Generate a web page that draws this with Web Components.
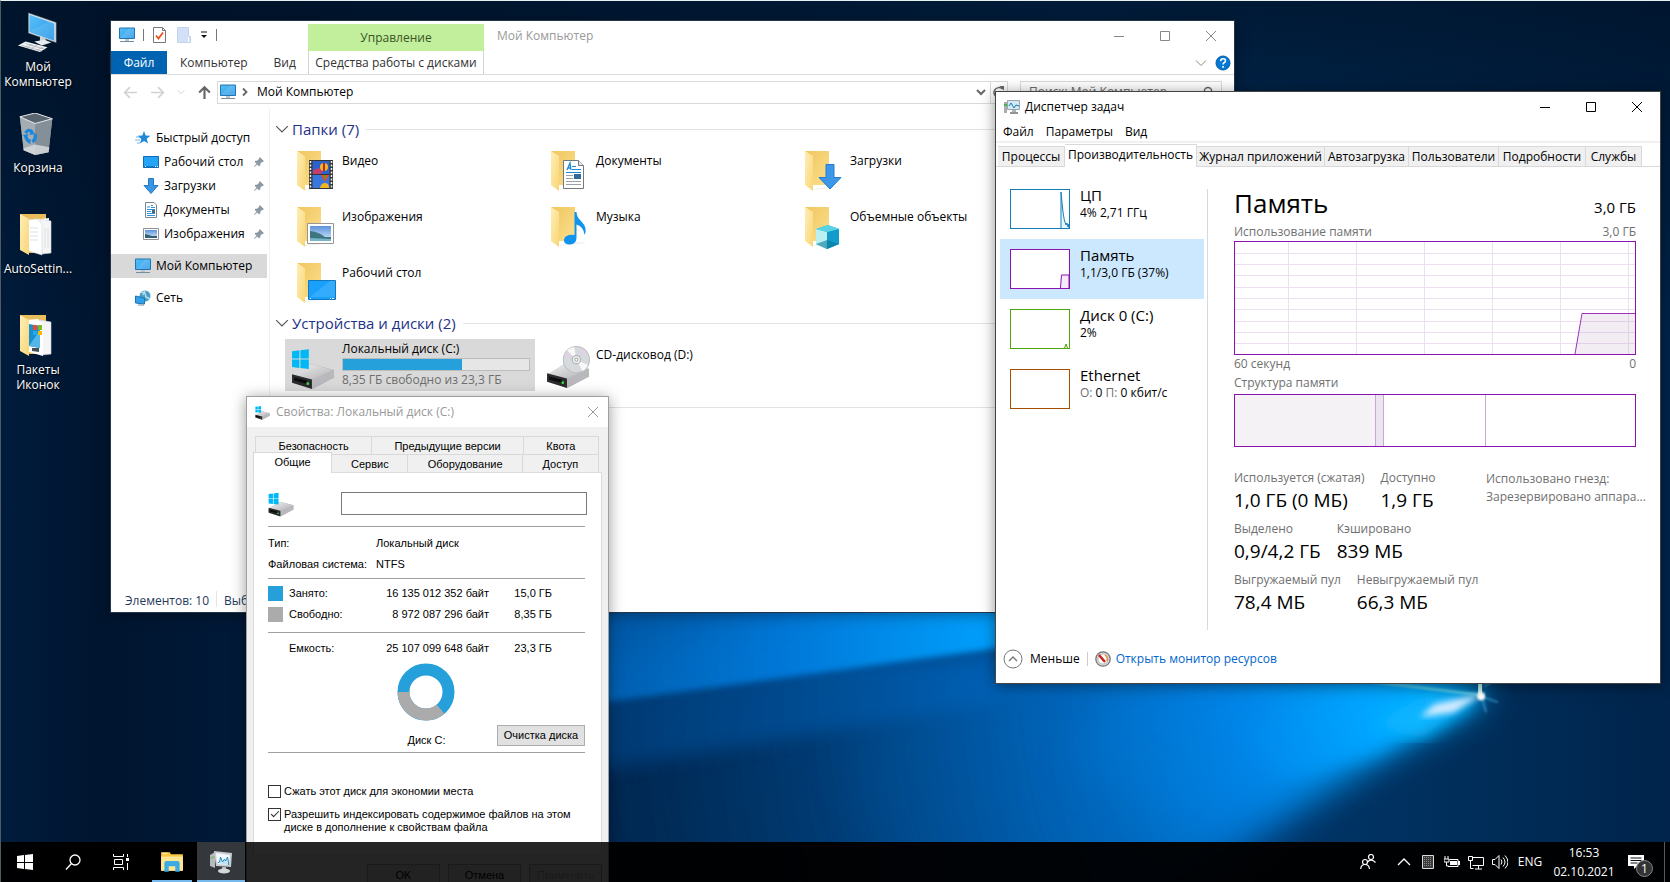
<!DOCTYPE html>
<html lang="ru">
<head>
<meta charset="utf-8">
<title>Рабочий стол</title>
<style>
html, body {
    height: 100%;
}
body {
    margin: 0;
    overflow: hidden;
    background: #00142c;
    font-family: "Open Sans", "Noto Sans", sans-serif;
    font-size: 12px;
    line-height: 16px;
    color: #000;
}
</style>
</head>
<body>
<desk-top>
    <desk-icon slot="icons" icon="pc">Мой Компьютер</desk-icon>
    <desk-icon slot="icons" icon="bin">Корзина</desk-icon>
    <desk-icon slot="icons" icon="docs">AutoSettin...</desk-icon>
    <desk-icon slot="icons" icon="pack">Пакеты Иконок</desk-icon>
    <explorer-window></explorer-window>
    <properties-dialog></properties-dialog>
    <task-manager></task-manager>
    <task-bar slot="bar"></task-bar>
</desk-top>

<script>
// gradients are repeated in every icon because each svg sits in its own shadow root
const defs = `<defs>
<linearGradient id="scr" x1="0" y1="0" x2="1" y2="1"><stop offset="0" stop-color="#57c1f7"/><stop offset="1" stop-color="#2b97e8"/></linearGradient>
<linearGradient id="back" x1="0" y1="0" x2="1" y2="1"><stop offset="0" stop-color="#f0c55e"/><stop offset="1" stop-color="#fbe08e"/></linearGradient>
<linearGradient id="flap" x1="0" y1="0" x2="1" y2="1"><stop offset="0" stop-color="#ffeeb4"/><stop offset="1" stop-color="#f8d678"/></linearGradient>
<linearGradient id="met" x1="0" y1="0" x2="1" y2="1"><stop offset="0" stop-color="#f1f1f1"/><stop offset="1" stop-color="#aeaeb2"/></linearGradient>
<linearGradient id="sky" x1="0" y1="0" x2="0" y2="1"><stop offset="0" stop-color="#5a93dc"/><stop offset="1" stop-color="#dcecfa"/></linearGradient>
</defs>`

const folder = `<path d="M1 0h24v34H8z" fill="url(#back)"/><path d="M1 0l8 5v35l-8-6z" fill="url(#flap)"/><path d="M9 38l22-3 6 1-28 3z" fill="#000" opacity=".06"/>`
const drive = `<path d="M1 29l15-10q3-2 6-1l19 5v7l-19 10q-2 1-4 0L1 34z" fill="#9c9ca0"/>
<path d="M1 28l15-9q3-2 6-1l19 5-21 10z" fill="url(#met)"/>
<path d="M20 32l21-9v7l-21 11z" fill="#b9b9bd"/><path d="M1 27l19 5v9L1 35z" fill="#2a2b2d"/>
<path d="M3 30l12 3v3L3 33z" fill="#0c0c0c"/><circle cx="16" cy="36" r="1.300" fill="#3be03b"/>`
const flag = `<path d="M1 5l7-1v8H1zM9 4l8-1v9H9zM1 13h7v8l-7-1zM9 13h8v9l-8-1z" fill="#00b8f5"/>`

const icons = {
    pc: ['0 0 44 44', `<path d="M12 1l29 10v21L12 22z" fill="#dfe6ea" stroke="#6e7d87" stroke-width=".6"/><path d="M13 3l26 9v18l-26-9z" fill="url(#scr)"/><path d="M13 20L34 10l5 2v18z" fill="#fff" opacity=".1"/>
<path d="M24 25l6 3v4h-6z" fill="#cdd3d6"/><path d="M18 31l11-2 7 3-10 3z" fill="#e6ebee"/><path d="M1 35l8-4 23 6-8 5z" fill="#f0f2f3"/><path d="M5 35l21 6M9 33l20 6M10 37l6-3M15 38l6-3M21 40l6-3" stroke="#a3adb3" stroke-width=".8"/>`],
    bin: ['0 0 44 44', `<path d="M3 4l16-4 18 6-4 35-14 3L7 39z" fill="#8d979e"/><path d="M3 4l16 7v33L7 39z" fill="#a5adb3"/><path d="M37 6l-18 5v33l14-3z" fill="#858f97"/><path d="M3 4l16-4 18 6-18 5z" fill="#596670" stroke="#e9edf0"/>
<path d="M7 37l12-4 15 3-1 5-14 3-12-5z" fill="#d9dcdf" opacity=".8"/><g fill="none" stroke="#1b87dc" stroke-width="3.500"><path d="M9 21q3-5 7-1"/><path d="M9 24q1 5 5 6"/><path d="M19 22q1 6-3 8"/></g><path d="M15 17l4 5-6 1zM6 23l6-1-2 5zM14 27v6l-3-3z" fill="#1b87dc"/>`],
    docs: ['0 0 40 42', `<path d="M2 0h26v39H10z" fill="#e8bd5b"/><path d="M14 6l17-2v33l-8 1z" fill="#fff"/><path d="M22 5l11 2v32l-9 1z" fill="#f5f5f5" stroke="#ccd2d6" stroke-width=".6"/><path d="M8 6l11-1 5 5v31l-13-4z" fill="#fff" stroke="#d5d9db" stroke-width=".6"/><path d="M12 14h8M12 18h8M12 22h8M12 26h8M27 14v20M30 14v20" stroke="#dbe0e3"/><path d="M2 0l9 5v36l-9-5z" fill="url(#flap)"/>`],
    pack: ['0 0 40 42', `<path d="M2 0h26v39H10z" fill="#e8bd5b"/><path d="M22 5l11 2v32l-9 1z" fill="#f5f5f5" stroke="#ccd2d6" stroke-width=".6"/><path d="M8 5l12-1 5 5v32l-14-4z" fill="#fff"/><path d="M11 9l11 2v22l-11-2z" fill="#168fd3"/><path d="M11 31l11-16v18z" fill="#54b6e8"/><path d="M14 33h7v4l-7-1z" fill="#46525b"/><path d="M15 10h4v5h-4z" fill="#ef4a2c"/><path d="M20 10h4v5h-4z" fill="#76bd22"/><path d="M15 16h4v4h-4z" fill="#2ba5ed"/><path d="M20 16h4v4h-4z" fill="#f7b90b"/><path d="M2 0l9 5v36l-9-5z" fill="url(#flap)"/>`],
    monitor: ['0 0 16 16', `<path d="M.5 1h15v10.500H.5z" fill="url(#scr)" stroke="#2376ad"/><path d="M1 11L10 1.500h5V11z" fill="#fff" opacity=".14"/><path d="M6 12h4v2H6z" fill="#b7c6d0"/><path d="M1 14h14v1H1z" fill="#788c9a"/>`],
    check: ['0 0 14 16', `<path d="M.5.5h9l3 3v12H.5z" fill="#fff" stroke="#777"/><path d="M9.500.5v3h3" fill="none" stroke="#777"/><path d="M3 8.500l2.500 3 4.500-6" fill="none" stroke="#e8501e" stroke-width="1.800"/>`],
    blank: ['0 0 14 16', `<path d="M.5.5h11v9h2v6H.5z" fill="#d3e0f5" stroke="#c3d2ec"/><path d="M11.500 10v5" stroke="#fff"/>`],
    drop: ['0 0 8 8', `<path d="M1 1h6" stroke="#111"/><path d="M1 4h6L4 7z" fill="#111"/>`],
    back: ['0 0 14 14', `<path d="M13 7H2M6.500 2L1.500 7l5 5" fill="none" stroke="#d2d2d2" stroke-width="1.500"/>`],
    forward: ['0 0 14 14', `<path d="M1 7h11M7.500 2l5 5-5 5" fill="none" stroke="#d2d2d2" stroke-width="1.500"/>`],
    up: ['0 0 14 14', `<path d="M7 13V2M2 7l5-5 5 5" fill="none" stroke="#666" stroke-width="2"/>`],
    down: ['0 0 12 12', `<path d="M1 3.500l5 5 5-5" fill="none" stroke="currentColor"/>`],
    bold: ['0 0 12 12', `<path d="M2 4l4 4 4-4" fill="none" stroke="currentColor" stroke-width="2"/>`],
    right: ['0 0 12 12', `<path d="M4 2.500L7.500 6 4 9.500" fill="none" stroke="#666" stroke-width="1.800"/>`],
    refresh: ['0 0 12 12', `<path d="M9.500 3A5 5 0 1 0 11 6.500" fill="none" stroke="#666" stroke-width="1.500"/><path d="M6.500 0h4.500v4.500z" fill="#666"/>`],
    find: ['0 0 12 12', `<circle cx="7" cy="5" r="3.600" fill="none" stroke="#666" stroke-width="1.500"/><path d="M4.500 8L1 11.500" stroke="#666" stroke-width="1.800"/>`],
    help: ['0 0 16 16', `<circle cx="8" cy="8" r="7" fill="#0078d7" stroke="#0a5ba0"/><path d="M5.700 6.200q0-2.500 2.400-2.500t2.300 2q0 1.200-1.300 2-1 .7-1 1.800" fill="none" stroke="#fff" stroke-width="1.600"/><path d="M7.200 11h1.700v1.700H7.200z" fill="#fff"/>`],
    star: ['0 0 16 16', `<path d="M9 1l1.700 4.500 4.800.2-3.800 3 1.300 4.800L9 11l-4 2.500L6.300 9l-3.800-3.300 4.800-.2z" fill="#1e88d6"/><path d="M1 7h4M0 10h5M2 13h3" stroke="#6cb5ea"/>`],
    desk: ['0 0 16 16', `<path d="M.5 2.500h15v11H.5z" fill="#25a3f7" stroke="#0c6cb4"/><path d="M1 12.500h14" stroke="#0b7ed0"/><path d="M2 12.500h1M12 12.500h1M14 12.500h1" stroke="#fff"/>`],
    load: ['0 0 16 16', `<path d="M5.500.5h5v7h4.500L8 15.500 1 7.500h4.500z" fill="#3a96e4" stroke="#2478c4"/>`],
    doc: ['0 0 16 16', `<path d="M2.500.5h8.500l2.500 2.500v12.500h-11z" fill="#fff" stroke="#7b858c"/><path d="M4 5h3M4 7.500h8M4 9.500h4M4 11.500h8M4 13.500h8M8 3.500h2M8 5.500h4" stroke="#2f94d5"/><path d="M9 8h3v3H9z" fill="#49657b"/>`],
    pic: ['0 0 16 16', `<path d="M.5 2.500h15v11H.5z" fill="#fff" stroke="#8c9298"/><path d="M2 4h12v8H2z" fill="url(#sky)"/><path d="M2 8l4 1 3 1h5v2H2z" fill="#355f75"/>`],
    net: ['0 0 16 16', `<circle cx="10" cy="6" r="5.500" fill="#4a9fc4"/><path d="M6 2l4 1 1 4 4 2M10 .5L8 5" stroke="#b9dcec" stroke-width="1.500" fill="none"/><path d="M.5 6l9 2v6l-9-1z" fill="#2fa1ea" stroke="#1c74b4"/><path d="M3 15h6" stroke="#7d8c98"/>`],
    pin: ['0 0 12 12', `<path d="M7 0l5 5-1.500 1-1 0-2 2.500 0 2L6 11 4 9 .5 12 0 11.500 3 8 1 6l.5-1.500h2L6 2.500 6 1.500z" fill="#8c99a3"/>`],
    video: ['0 0 40 42', folder + `<path d="M13 9h24v29H13z" fill="#343434"/><path d="M16.500 10h17v13h-17z" fill="#2d62cc"/><path d="M16.500 24h17v13h-17z" fill="#3977dd"/><path d="M14.500 10v28M35.500 10v28" stroke="#f1f1f1" stroke-width="1.500" stroke-dasharray="2 1.500"/><path d="M17 19l6-2 4 3-2 3h-8z" fill="#c23e6e"/><circle cx="28" cy="16" r="4" fill="#f1b722"/><path d="M28 12v8" stroke="#bd271d" stroke-width="2"/><path d="M25 24h8l-4 7z" fill="#ec4a22"/><path d="M28 24h2v6z" fill="#35ae32"/><path d="M24 37q1-5 5-5t4 5z" fill="#f1b722"/>`],
    documents: ['0 0 40 42', folder + `<path d="M13.500 9.500h15l5 5v23h-20z" fill="#fff" stroke="#74797d"/><path d="M28.500 9.500v5h5" fill="#e4e8ea" stroke="#74797d"/><path d="M17 19l3-7 1 7M17.500 17h3.500" stroke="#1e88d6" fill="none" stroke-width="1.300"/><path d="M22 15.500h4M22 18.500h9M16 21.500h15" stroke="#1e88d6"/><path d="M16 24.500h7M16 27.500h7M16 30.500h15M16 33.500h15" stroke="#9aa0a4"/><path d="M24 23h7v5h-7z" fill="#31699a"/>`],
    downloads: ['0 0 40 42', folder + `<path d="M22 13.500h8v13h7L26 38 15 26.500h7z" fill="#3d97e8" stroke="#257cce"/>`],
    images: ['0 0 40 42', folder + `<path d="M11.500 16.500h26v20h-26z" fill="#fff" stroke="#979797"/><path d="M14 19h21v15H14z" fill="url(#sky)"/><path d="M14 24q9 1 15 6h6v4H14z" fill="#3f7580"/><path d="M14 31l21 1v2H14z" fill="#77b5c7"/>`],
    music: ['0 0 40 42', folder + `<path d="M24.500 5h2q0 5 4.500 9 7 7 3.500 14-.5-8-8-10.500V31q-.5 6-6.500 6.500-6.500 0-6-5Q15.500 27 24.500 28z" fill="#0e93ee"/>`],
    objects: ['0 0 40 42', folder + `<path d="M12 22l12-4 11 4v15l-12 5-11-5z" fill="#19b9d8"/><path d="M12 22l11 3v17l-11-5z" fill="#baf0f2"/><path d="M23 25l12-3v15l-12 5z" fill="#119ccb"/><path d="M12 22l12-4 11 4-12 3z" fill="#5bd2e3"/><path d="M12 37l11-4 12 4-12 5z" fill="#087a9b" opacity=".6"/>`],
    desktop: ['0 0 40 42', folder + `<path d="M12.500 17.500h27v19h-27z" fill="#18a0fb" stroke="#1078be"/><path d="M14 34L34 18h5v16z" fill="#fff" opacity=".12"/><path d="M14 35.500h1M34 35.500h1M36 35.500h2" stroke="#fff"/>`],
    drive: ['0 0 42 42', drive + flag],
    cd: ['0 0 42 42', drive + `<circle cx="29" cy="14" r="12.500" fill="#d6dadd" stroke="#bcc0c3"/><path d="M29 14L20 5a12 12 0 0 1 7-3zM29 14l11 5a12 12 0 0 1-5 6z" fill="#fff" opacity=".8"/><path d="M29 14l-12-4 1-3zM29 14l6-11 3 3z" fill="#ebc8ec" opacity=".6"/><circle cx="29" cy="14" r="4" fill="#eceeef" stroke="#aab0b4"/><circle cx="29" cy="14" r="1.500" fill="#fff" stroke="#aaa"/>`],
    tm: ['0 0 16 16', `<path d="M0 3h3v11H0z" fill="#a8adb0"/><path d="M0 5h3v2H0z" fill="#41b946"/><path d="M3.500 1.500h12v9h-12z" fill="#d3e9f5" stroke="#9aa5ac"/><path d="M5 7l2-3 3 5 2-3 3 1" stroke="#1779b5" fill="none"/><path d="M8 11h4v2H8z" fill="#aeb4b8"/><path d="M6 14h8" stroke="#8f9599" stroke-width="2"/>`],
    gauge: ['0 0 16 16', `<circle cx="8" cy="8" r="7.200" fill="#d8d8d8" stroke="#777" stroke-width="1.300"/><circle cx="8" cy="8" r="5" fill="#fff" stroke="#aaa" stroke-width=".7"/><path d="M10 4q3 2 2 6" stroke="#e78d49" fill="none" stroke-width="1.500"/><path d="M4 4l6 7" stroke="#cb1f1c" stroke-width="2.500"/>`],
    less: ['0 0 20 20', `<circle cx="10" cy="10" r="9" fill="none" stroke="#777"/><path d="M6 12l4-4 4 4" fill="none" stroke="#777" stroke-width="1.300"/>`],
    min: ['0 0 12 12', `<path d="M1 6.500h10" stroke="currentColor"/>`],
    max: ['0 0 12 12', `<path d="M1.500 1.500h9v9h-9z" fill="none" stroke="currentColor"/>`],
    close: ['0 0 12 12', `<path d="M1 1l10 10M11 1L1 11" stroke="currentColor"/>`],
    start: ['0 0 16 16', `<path d="M0 2l7-1v7H0zM8 1l8-1v8H8zM0 9h7v6l-7-1zM8 9h8v7l-8-1z" fill="#fff"/>`],
    search: ['0 0 16 16', `<circle cx="10" cy="6" r="5" fill="none" stroke="#fff" stroke-width="1.300"/><path d="M6.500 9.500L1 15.500" stroke="#fff" stroke-width="1.300"/>`],
    view: ['0 0 16 16', `<path d="M.5 0v2.500h10V0M1.500 5.500h8v5h-8zM.5 16v-2.500h10V16M14.500 0v3M14.500 9v7" fill="none" stroke="#fff"/><path d="M13 4h3v3h-3z" fill="#fff"/>`],
    files: ['0 0 22 20', `<path d="M1 1h8l1 2h11v15H1z" fill="#fbc842"/><path d="M1 5h20v13H1z" fill="#ffe694"/><path d="M4 19v-8q0-2 2-2h10q2 0 2 2v8h-4v-5H8v5z" fill="#3cabe2"/><path d="M2 2h5" stroke="#fff3c6"/>`],
    taskmgr: ['0 0 24 24', `<path d="M1 5l5-3v16l-5-2z" fill="#b6babc"/><path d="M1 7l5-1v2l-5 1z" fill="#8fb58c"/><path d="M5 1l18 2-1 14-15-1z" fill="#c9cdcf"/><path d="M7 3l14 2-1 10-12-1z" fill="#f2fafd"/><path d="M8.500 13l2-1 1-5 2 5 2-3 1 2 2-4 1 5v3" fill="#bfe3f5" stroke="#1e82bb" stroke-width=".9"/><path d="M13 17h4v3h-4z" fill="#b7bbbe"/><ellipse cx="15" cy="21" rx="6" ry="2.500" fill="#d5d8da"/>`],
    people: ['0 0 16 16', `<g fill="none" stroke="#fff" stroke-width="1.200"><circle cx="11" cy="3" r="2.500"/><path d="M7.500 8q3.500-4 8 .5"/><circle cx="5" cy="8" r="2.500"/><path d="M.7 15Q1 10.500 5 10.500T9.500 15"/></g>`],
    tray: ['0 0 16 16', `<path d="M2 11l6-6 6 6" fill="none" stroke="#fff" stroke-width="1.300"/>`],
    dots: ['0 0 16 16', `<path d="M2.500 1.500h11v13h-11z" fill="#3b3b3b" stroke="#ddd"/><path d="M4 3.500h8M4 5.500h8M4 7.500h8M4 9.500h8M4 11.500h8" stroke="#8c8c8c" stroke-dasharray="1 1"/>`],
    battery: ['0 0 16 16', `<path d="M5.500 5.500h8.500v7H4" fill="none" stroke="#fff"/><path d="M6 7h7v4H6z" fill="#fff"/><path d="M14 7h2v4h-2z" fill="#fff"/><path d="M1 2v3M4 2v3M0 5h5v3H0zM2.500 8v4h2" stroke="#fff" fill="none"/>`],
    lan: ['0 0 16 16', `<path d="M5 3.500h10.500v8H4.500M7 15h7M10.500 11.500V15M.5 2.500h4v4h-4zM2.500 6v8.500h3" fill="none" stroke="#fff"/>`],
    sound: ['0 0 16 16', `<path d="M.5 5.500H3l4-4v13l-4-4H.5z" fill="none" stroke="#fff"/><path d="M9 5.500q2 2.500 0 5M11 3.500q4 4.500 0 9M13 1.500q6 6.500 0 13" fill="none" stroke="#fff"/>`],
    note: ['0 0 16 16', `<path d="M0 1h16v11H9l-3 3v-3H0z" fill="#fff"/><path d="M2.500 4h11M2.500 6.500h11M2.500 9h7" stroke="#0b0e12" stroke-width="1.200"/>`]
}

class WinIcon extends HTMLElement
{
    constructor()
    {
        super()
        this.attachShadow({ mode: 'open' })
    }
    connectedCallback() {
        const [box, body] = icons[this.getAttribute('name')]
        const extra = body.includes('url(#') ? defs : ''
        this.shadowRoot.innerHTML = `
        <style>
        :host {
            display: block;
            flex: none;
            width: var(--w, 16px);
            height: var(--h, var(--w, 16px));
        }
        svg {
            display: block;
            width: 100%;
            height: 100%;
        }
        </style>
        <svg viewBox="${box}" fill="none" aria-hidden="true">${extra}${body}</svg>`
    }
}
window.customElements.define('win-icon', WinIcon)

class DeskTop extends HTMLElement
{
    constructor()
    {
        super()
        this.attachShadow({ mode: 'open' }).innerHTML = `
        <style>
        :host {
            display: flex;
            flex-direction: column;
            position: relative;
            height: 100vh;
            overflow: hidden;
            box-sizing: border-box;
            border-top: 1px solid #e8f1f1;
            border-left: 1px solid #4f5a61;
        }
        .wall {
            position: absolute;
            inset: 0;
            width: 100%;
            height: 100%;
        }
        .shade {
            position: absolute;
            inset: auto 0 0 0;
            height: 40px;
            background: rgba(0,0,0,.75);
        }
        .icons {
            position: relative;
            display: grid;
            grid-auto-rows: 101px;
            width: 74px;
            flex: 1;
            padding-top: 11px;
        }
        slot[name=bar] {
            display: block;
            position: relative;
            z-index: 5;
        }
        </style>
        <svg class="wall" viewBox="0 0 1670 882" preserveAspectRatio="xMidYMid slice" aria-hidden="true">
            <defs>
                <linearGradient id="base" x1="0" y1="0" x2="1" y2="0">
                    <stop offset="0" stop-color="#001c3c"/><stop offset=".06" stop-color="#00152f"/><stop offset=".36" stop-color="#00264f"/>
                    <stop offset=".65" stop-color="#003c74"/><stop offset=".85" stop-color="#00305e"/><stop offset="1" stop-color="#00244b"/>
                </linearGradient>
                <linearGradient id="top" x1="0" y1="0" x2="0" y2="1">
                    <stop offset="0" stop-color="#001228" stop-opacity=".8"/><stop offset="1" stop-color="#001228" stop-opacity="0"/>
                </linearGradient>
                <radialGradient id="glow" gradientUnits="userSpaceOnUse" cx="1480" cy="695" r="940">
                    <stop offset="0" stop-color="#0cb2ff"/><stop offset=".13" stop-color="#00a4ff"/><stop offset=".26" stop-color="#0086ea"/>
                    <stop offset=".48" stop-color="#0064b8"/><stop offset=".7" stop-color="#004584" stop-opacity=".8"/><stop offset="1" stop-color="#002850" stop-opacity="0"/>
                </radialGradient>
                <linearGradient id="left" gradientUnits="userSpaceOnUse" x1="560" y1="0" x2="1010" y2="0">
                    <stop offset="0" stop-color="#0058a4"/><stop offset=".5" stop-color="#0078d8"/><stop offset="1" stop-color="#00a2ff"/>
                </linearGradient>
                <linearGradient id="band" gradientUnits="userSpaceOnUse" x1="560" y1="0" x2="1250" y2="0">
                    <stop offset="0" stop-color="#003a74"/><stop offset=".6" stop-color="#0060b4"/><stop offset="1" stop-color="#0078d8" stop-opacity="0"/>
                </linearGradient>
                <filter id="b1"><feGaussianBlur stdDeviation="1"/></filter>
                <filter id="b3"><feGaussianBlur stdDeviation="3"/></filter>
                <filter id="b9"><feGaussianBlur stdDeviation="9"/></filter>
                <filter id="b20" x="-20%" y="-30%" width="140%" height="160%"><feGaussianBlur stdDeviation="20"/></filter>
            </defs>
            <path d="M0 0h1670v882H0z" fill="url(#base)"/>
            <path d="M0 0h1670v340H0z" fill="url(#top)"/>
            <path d="M1500 640H900L560 740v60l140 120h440z" fill="url(#glow)" opacity=".75" filter="url(#b20)"/>
            <path d="M1496 680l-496-40-160 100 80 240 210-60z" fill="url(#glow)" opacity=".6" filter="url(#b20)"/>
            <path d="M560 660h560l130 20-240 20L560 776z" fill="url(#band)" opacity=".8" filter="url(#b9)"/>
            <path d="M560 560h560v71L560 708z" fill="url(#left)" filter="url(#b3)"/>
            <path d="M560 580h300L560 664z" fill="#00488f" opacity=".4" filter="url(#b20)"/>
            <path d="M1484 698l-90-34-280 20-40 80 120 60z" fill="url(#glow)" opacity=".8" filter="url(#b20)"/>
            <path d="M1484 697l-110-10-130 40 40 50 90-24z" fill="url(#glow)" filter="url(#b9)"/>
            <path d="M1480 696l-60 2-50 26 50 14z" fill="#0cb6ff" filter="url(#b9)"/>
            <path d="M1484 693l-50 11-14 13 34-5z" fill="#d4ecff" filter="url(#b3)"/>
            <path d="M1370 681l112 14" stroke="#6fd8e8" stroke-width="3" opacity=".7" filter="url(#b1)"/>
            <path d="M1478 670h4v24h-4z" fill="#c6f3ef"/>
            <path d="M1484 686l10-6M1482 698l4 14M1484 697l14 5" stroke="#5cc0f5" stroke-width="2" opacity=".5" filter="url(#b1)"/>
            <circle cx="1481" cy="696" r="4" fill="#fff" filter="url(#b1)"/>
        </svg>
        <div class="shade"></div>
        <div class="icons"><slot name="icons"></slot></div>
        <slot></slot>
        <slot name="bar"></slot>`
    }
}
window.customElements.define('desk-top', DeskTop)

class DeskIcon extends HTMLElement
{
    constructor()
    {
        super()
        this.attachShadow({ mode: 'open' })
    }
    connectedCallback() {
        this.shadowRoot.innerHTML = `
        <style>
        :host {
            display: flex;
            flex-direction: column;
            align-items: center;
            gap: 5px;
            text-align: center;
            line-height: 15px;
            color: #fff;
            text-shadow: 1px 1px 2px #000;
        }
        win-icon { --w: 42px; }
        </style>
        <win-icon name="${this.getAttribute('icon')}"></win-icon>
        <span><slot></slot></span>`
    }
}
window.customElements.define('desk-icon', DeskIcon)

// minimize / maximize / close, used in the window titles
class WinControls extends HTMLElement
{
    constructor()
    {
        super()
        this.attachShadow({ mode: 'open' }).innerHTML = `
        <style>
        :host { display: flex; flex: none; }
        button {
            display: grid;
            place-items: center;
            width: 46px;
            height: 30px;
            padding: 0;
            border: 0;
            background: none;
            color: inherit;
        }
        win-icon { --w: 12px; }
        :host([only-close]) .more { display: none; }
        :host([only-close]) button { width: 30px; }
        </style>
        <button class="more" aria-label="Свернуть"><win-icon name="min"></win-icon></button>
        <button class="more" aria-label="Развернуть"><win-icon name="max"></win-icon></button>
        <button aria-label="Закрыть"><win-icon name="close"></win-icon></button>`
    }
}
window.customElements.define('win-controls', WinControls)

class SideItem extends HTMLElement
{
    constructor()
    {
        super()
        this.attachShadow({ mode: 'open' })
    }
    connectedCallback() {
        const pin = this.hasAttribute('pinned') ? '<win-icon class="pin" name="pin"></win-icon>' : ''
        this.shadowRoot.innerHTML = `
        <style>
        :host { display: block; }
        a {
            display: flex;
            align-items: center;
            gap: 5px;
            height: 24px;
            padding: 0 3px 0 24px;
            color: inherit;
            text-decoration: none;
            white-space: nowrap;
        }
        :host([pinned]) a { padding-left: 32px; }
        :host([current]) { margin: 8px 0; }
        :host([current]) a { background: #d9d9d9; }
        span { flex: 1; }
        .pin { --w: 10px; }
        </style>
        <a href="#"><win-icon name="${this.getAttribute('icon')}"></win-icon><span><slot></slot></span>${pin}</a>`
    }
}
window.customElements.define('side-item', SideItem)

class TileGroup extends HTMLElement
{
    constructor()
    {
        super()
        this.attachShadow({ mode: 'open' }).innerHTML = `
        <style>
        :host { display: block; }
        h2 {
            display: flex;
            align-items: center;
            gap: 3px;
            margin: 0;
            height: 26px;
            font-size: 15px;
            font-weight: 400;
            color: #1e3287;
        }
        h2 win-icon { --w: 14px; color: #555; }
        h2::after {
            content: "";
            flex: 1;
            height: 1px;
            margin-left: 4px;
            background: #e2e2e2;
        }
        .tiles {
            display: grid;
            grid-template-columns: repeat(auto-fill, 254px);
            padding-left: 10px;
        }
        </style>
        <h2><win-icon name="down"></win-icon><slot name="title"></slot></h2>
        <div class="tiles"><slot></slot></div>`
    }
}
window.customElements.define('tile-group', TileGroup)

class FolderTile extends HTMLElement
{
    constructor()
    {
        super()
        this.attachShadow({ mode: 'open' })
    }
    connectedCallback() {
        this.shadowRoot.innerHTML = `
        <style>
        :host {
            display: flex;
            gap: 6px;
            height: 47px;
            padding: 9px 0 0 11px;
        }
        win-icon { --w: 40px; --h: 42px; }
        span { padding-top: 2px; }
        :host([disc]) { padding-left: 7px; height: 43px; }
        :host([disc]) win-icon { --w: 44px; --h: 44px; }
        </style>
        <win-icon name="${this.getAttribute('icon')}"></win-icon><span><slot></slot></span>`
    }
}
window.customElements.define('folder-tile', FolderTile)

class DriveTile extends HTMLElement
{
    constructor()
    {
        super()
        this.attachShadow({ mode: 'open' }).innerHTML = `
        <style>
        :host {
            display: flex;
            gap: 7px;
            height: 52px;
            margin: 3px 4px 0 0;
            padding: 0 5px 0 6px;
            background: #d9d9d9;
            box-sizing: border-box;
        }
        win-icon { --w: 44px; padding-top: 7px; }
        .info { flex: 1; }
        .bar {
            height: 11px;
            margin: 1px 0;
            border: 1px solid #bcbcbc;
            background: #e6e6e6;
        }
        .bar i {
            display: block;
            width: 64%;
            height: 100%;
            background: #26a0da;
        }
        .name { padding-top: 2px; }
        .free { color: #6d6d6d; }
        </style>
        <win-icon name="drive"></win-icon>
        <div class="info">
            <div class="name"><slot></slot></div>
            <div class="bar"><i></i></div>
            <div class="free"><slot name="free"></slot></div>
        </div>`
    }
}
window.customElements.define('drive-tile', DriveTile)

class ExplorerWindow extends HTMLElement
{
    constructor()
    {
        super()
        this.attachShadow({ mode: 'open' }).innerHTML = `
        <style>
        :host {
            position: absolute;
            left: 110px;
            right: 436px;
            top: 20px;
            min-height: 591px;
            display: flex;
            flex-direction: column;
            background: #fff;
            box-shadow: 0 0 0 1px #23364c, 0 2px 14px rgba(0,0,0,.4);
        }
        button {
            border: 0;
            padding: 0;
            background: none;
            font: inherit;
            color: inherit;
        }
        .head {
            display: grid;
            grid-template-columns: 197px 176px 1fr auto;
            grid-template-rows: 30px 23px;
            border-bottom: 1px solid #dadbdc;
            color: #333;
        }
        .quick {
            display: flex;
            align-items: center;
            gap: 8px;
            padding: 0 0 2px 8px;
        }
        .quick i {
            width: 1px;
            height: 12px;
            background: #777;
        }
        .quick .drop { --w: 8px; }
        .tool {
            display: grid;
            place-items: center;
            margin-top: 3px;
            background: #c2ef9b;
            color: #3a5225;
        }
        .title {
            padding: 7px 13px;
            color: #999;
        }
        win-controls { color: #888; }
        .tabs {
            display: flex;
        }
        .tabs button { padding: 0 13px; }
        .tabs .file {
            flex: none;
            width: 56px;
            padding: 0;
            background: #0063b1;
            color: #fff;
        }
        .disk {
            border: solid #d5d5d5;
            border-width: 0 1px;
            white-space: nowrap;
        }
        .help {
            grid-column: 4;
            display: flex;
            align-items: center;
            justify-content: flex-end;
            gap: 8px;
            padding-right: 3px;
            color: #888;
        }
        .nav {
            display: flex;
            align-items: center;
            height: 34px;
            padding: 0 12px;
            color: #666;
        }
        .nav button { display: grid; place-items: center; }
        .arrows {
            display: flex;
            align-items: center;
            gap: 12px;
            width: 94px;
        }
        .arrows win-icon { --w: 15px; }
        .arrows .small { --w: 8px; color: #bbb; }
        .address {
            flex: 1;
            display: flex;
            align-items: center;
            gap: 3px;
            height: 21px;
            padding-left: 2px;
            border: 1px solid #d9d9d9;
            color: #000;
        }
        .address span { flex: 1; padding-left: 3px; }
        .address win-icon.small, .address button win-icon { --w: 12px; color: #666; }
        .refresh {
            width: 17px;
            height: 21px;
            border-left: 1px solid #d9d9d9;
        }
        .search {
            display: flex;
            align-items: center;
            width: 200px;
            height: 21px;
            margin-left: 12px;
            border: 1px solid #d9d9d9;
        }
        .search input {
            flex: 1;
            min-width: 0;
            border: 0;
            padding: 0 8px;
            font: inherit;
        }
        .search input::placeholder { color: #6d6d6d; }
        .search win-icon { --w: 12px; margin-right: 8px; }
        .body {
            flex: 1;
            display: flex;
        }
        aside {
            width: 156px;
            padding: 17px 2px 0 0;
            border-right: 1px solid #f0f0f0;
        }
        .main {
            flex: 1;
            padding: 7px 0 0 5px;
        }
        .more {
            height: 16px;
            border-bottom: 1px solid #e2e2e2;
        }
        footer {
            display: flex;
            height: 21px;
            padding: 0 14px;
            color: #1e395b;
        }
        footer span + span {
            margin-left: 7px;
            padding-left: 7px;
            height: 16px;
            border-left: 1px solid #e5e5e5;
        }
        footer span { line-height: 20px; }
        </style>
        <div class="head">
            <div class="quick">
                <win-icon name="monitor"></win-icon><i></i>
                <win-icon name="check"></win-icon><win-icon name="blank"></win-icon>
                <win-icon class="drop" name="drop"></win-icon><i></i>
            </div>
            <div class="tool">Управление</div>
            <div class="title">Мой Компьютер</div>
            <win-controls></win-controls>
            <div class="tabs"><button class="file">Файл</button><button>Компьютер</button><button>Вид</button></div>
            <button class="disk">Средства работы с дисками</button>
            <div class="help"><win-icon name="down" style="--w:12px"></win-icon><win-icon name="help"></win-icon></div>
        </div>
        <div class="nav">
            <div class="arrows">
                <button aria-label="Назад"><win-icon name="back"></win-icon></button>
                <button aria-label="Вперед"><win-icon name="forward"></win-icon></button>
                <win-icon class="small" name="down"></win-icon>
                <button aria-label="Вверх"><win-icon name="up"></win-icon></button>
            </div>
            <div class="address">
                <win-icon name="monitor"></win-icon><win-icon class="small" name="right"></win-icon>
                <span>Мой Компьютер</span>
                <button aria-label="История"><win-icon name="bold"></win-icon></button>
                <button class="refresh" aria-label="Обновить"><win-icon name="refresh"></win-icon></button>
            </div>
            <div class="search">
                <input type="search" aria-label="Поиск" placeholder="Поиск: Мой Компьютер">
                <win-icon name="find"></win-icon>
            </div>
        </div>
        <div class="body">
            <aside>
                <side-item icon="star">Быстрый доступ</side-item>
                <side-item icon="desk" pinned>Рабочий стол</side-item>
                <side-item icon="load" pinned>Загрузки</side-item>
                <side-item icon="doc" pinned>Документы</side-item>
                <side-item icon="pic" pinned>Изображения</side-item>
                <side-item icon="monitor" current>Мой Компьютер</side-item>
                <side-item icon="net">Сеть</side-item>
            </aside>
            <div class="main">
                <tile-group>
                    <span slot="title">Папки (7)</span>
                    <folder-tile icon="video">Видео</folder-tile>
                    <folder-tile icon="documents">Документы</folder-tile>
                    <folder-tile icon="downloads">Загрузки</folder-tile>
                    <folder-tile icon="images">Изображения</folder-tile>
                    <folder-tile icon="music">Музыка</folder-tile>
                    <folder-tile icon="objects">Объемные объекты</folder-tile>
                    <folder-tile icon="desktop">Рабочий стол</folder-tile>
                </tile-group>
                <tile-group>
                    <span slot="title">Устройства и диски (2)</span>
                    <drive-tile>Локальный диск (C:)<span slot="free">8,35 ГБ свободно из 23,3 ГБ</span></drive-tile>
                    <folder-tile icon="cd" disc>CD-дисковод (D:)</folder-tile>
                </tile-group>
                <div class="more"></div>
            </div>
        </div>
        <footer><span>Элементов: 10</span><span>Выб</span></footer>`
    }
}
window.customElements.define('explorer-window', ExplorerWindow)

class PropertiesDialog extends HTMLElement
{
    constructor()
    {
        super()
        this.attachShadow({ mode: 'open' }).innerHTML = `
        <style>
        :host {
            position: absolute;
            left: 245px;
            top: 395px;
            width: 361px;
            background: #f0f0f0;
            border: 1px solid #a0a0a0;
            box-shadow: 0 2px 14px rgba(0,0,0,.4);
            font: 11px/13px "Liberation Sans", sans-serif;
        }
        header {
            display: flex;
            align-items: center;
            gap: 6px;
            height: 30px;
            padding-left: 8px;
            background: #fff;
            font: 12px/16px "Open Sans", sans-serif;
            color: #999;
        }
        header span { flex: 1; }
        header win-icon { --w: 15px; }
        .box { padding: 9px 6px 0; }
        .row {
            display: grid;
            padding: 0 3px 0 2px;
        }
        .row.one { grid-template-columns: 117fr 151fr 75fr; }
        .row.two { grid-template-columns: 77fr 76fr 114fr 76fr; }
        .row button {
            height: 18px;
            padding: 1px 0 0;
            border: solid #d9d9d9;
            border-width: 1px 1px 0 0;
            background: #f0f0f0;
            font: inherit;
        }
        .row button:first-child { border-left-width: 1px; }
        .row button.on {
            height: 21px;
            margin: -2px 0 -1px -2px;
            padding-bottom: 3px;
            background: #fff;
            z-index: 1;
        }
        .page {
            height: 383px;
            padding: 0 16px 0 14px;
            border: 1px solid #dcdcdc;
            background: #fff;
            box-sizing: border-box;
        }
        .name {
            display: flex;
            align-items: end;
            justify-content: space-between;
            height: 53px;
            border-bottom: 1px solid #a0a0a0;
        }
        .name win-icon { --w: 26px; padding-bottom: 9px; }
        .name input {
            width: 246px;
            height: 23px;
            margin: 0 -2px 11px 0;
            padding: 1px 4px;
            border: 1px solid #7a7a7a;
            box-sizing: border-box;
            font: inherit;
        }
        dl {
            display: grid;
            grid-template-columns: 108px 1fr;
            row-gap: 8px;
            margin: 0;
            padding: 10px 0 7px;
            border-bottom: 1px solid #a0a0a0;
        }
        dd { margin: 0; }
        table {
            width: 100%;
            border-collapse: collapse;
        }
        th, td {
            height: 21px;
            padding: 0;
            text-align: right;
            font-weight: 400;
        }
        th {
            width: 100px;
            text-align: left;
        }
        td:last-child {
            width: 63px;
            padding-right: 33px;
        }
        .sum th, .sum td {
            height: 30px;
            border-top: 1px solid #a0a0a0;
        }
        .sum span { padding-left: 21px; }
        .gap td { height: 7px; }
        .gap.small td { height: 4px; }
        th span { vertical-align: middle; }
        th i {
            display: inline-block;
            width: 15px;
            height: 15px;
            margin-right: 6px;
            vertical-align: middle;
            background: #26a0da;
        }
        th i.free { background: #ababab; }
        .chart {
            display: grid;
            grid-template-columns: 1fr 1fr 1fr;
            align-items: end;
            padding-bottom: 5px;
            border-bottom: 1px solid #a0a0a0;
        }
        figure {
            grid-column: 2;
            margin: 0;
            text-align: center;
        }
        figure svg {
            display: block;
            width: 58px;
            height: 58px;
            margin: 0 auto 13px;
        }
        .clean {
            justify-self: end;
            width: 88px;
            height: 21px;
            margin-bottom: 1px;
            padding: 0;
            border: 1px solid #adadad;
            background: #e1e1e1;
            font: inherit;
            white-space: nowrap;
        }
        label {
            display: flex;
            gap: 3px;
            align-items: flex-start;
        }
        .checks {
            display: grid;
            gap: 10px;
            padding-top: 32px;
            margin-right: -8px;
        }
        input[type=checkbox] {
            appearance: none;
            flex: none;
            width: 13px;
            height: 13px;
            margin: 0;
            border: 1px solid #333;
            background: #fff;
        }
        input:checked::before {
            content: "";
            display: block;
            width: 3px;
            height: 7px;
            margin: 0 0 0 4px;
            border: solid #222;
            border-width: 0 1px 1px 0;
            transform: rotate(45deg);
        }
        .buttons {
            display: flex;
            justify-content: flex-end;
            gap: 8px;
            padding: 9px 0 10px;
        }
        .buttons button {
            width: 73px;
            height: 23px;
            padding: 0;
            border: 1px solid #adadad;
            background: #e1e1e1;
            font: inherit;
        }
        </style>
        <header><win-icon name="drive"></win-icon><span>Свойства: Локальный диск (C:)</span><win-controls only-close></win-controls></header>
        <div class="box">
            <div class="row one"><button>Безопасность</button><button>Предыдущие версии</button><button>Квота</button></div>
            <div class="row two"><button class="on">Общие</button><button>Сервис</button><button>Оборудование</button><button>Доступ</button></div>
            <div class="page">
                <div class="name"><win-icon name="drive"></win-icon><input type="text" aria-label="Метка тома"></div>
                <dl><dt>Тип:</dt><dd>Локальный диск</dd><dt>Файловая система:</dt><dd>NTFS</dd></dl>
                <table>
                    <tr class="gap small"><td colspan="3"></td></tr>
                    <tr><th><i></i><span>Занято:</span></th><td>16 135 012 352 байт</td><td>15,0 ГБ</td></tr>
                    <tr><th><i class="free"></i><span>Свободно:</span></th><td>8 972 087 296 байт</td><td>8,35 ГБ</td></tr>
                    <tr class="gap"><td colspan="3"></td></tr>
                    <tr class="sum"><th><span>Емкость:</span></th><td>25 107 099 648 байт</td><td>23,3 ГБ</td></tr>
                </table>
                <div class="chart">
                    <figure>
                        <svg viewBox="0 0 58 58" aria-hidden="true"><circle cx="29" cy="29" r="22.500" fill="none" stroke="#26a0da" stroke-width="12"/>
                        <path d="M6.500 29a22.500 22.500 0 0 0 37 17.200" fill="none" stroke="#ababab" stroke-width="12"/></svg>
                        <figcaption>Диск C:</figcaption>
                    </figure>
                    <button class="clean">Очистка диска</button>
                </div>
                <div class="checks">
                    <label><input type="checkbox">Сжать этот диск для экономии места</label>
                    <label><input type="checkbox" checked><span>Разрешить индексировать содержимое файлов на этом диске в дополнение к свойствам файла</span></label>
                </div>
            </div>
            <div class="buttons"><button>OK</button><button>Отмена</button><button disabled>Применить</button></div>
        </div>`
    }
}
window.customElements.define('properties-dialog', PropertiesDialog)

class PerfItem extends HTMLElement
{
    constructor()
    {
        super()
        this.attachShadow({ mode: 'open' })
    }
    connectedCallback() {
        const color = this.getAttribute('color')
        const line = this.getAttribute('line') || ''
        this.shadowRoot.innerHTML = `
        <style>
        :host {
            display: flex;
            gap: 10px;
            height: 60px;
            padding: 10px 0 0 10px;
            box-sizing: border-box;
        }
        :host([current]) { background: #cce8ff; }
        svg {
            flex: none;
            width: 58px;
            height: 38px;
            border: 1px solid ${color};
            background: #fff;
        }
        b {
            display: block;
            margin-top: -3px;
            font-size: 15px;
            font-weight: 400;
            line-height: 19px;
        }
        </style>
        <svg viewBox="0 0 58 38" aria-hidden="true"><path d="${line}" fill="${color}" fill-opacity=".08" stroke="${color}"/></svg>
        <div><b><slot name="name"></slot></b><slot></slot></div>`
    }
}
window.customElements.define('perf-item', PerfItem)

class MemStat extends HTMLElement
{
    constructor()
    {
        super()
        this.attachShadow({ mode: 'open' }).innerHTML = `
        <style>
        :host { display: block; height: 51px; color: #707070; white-space: nowrap; }
        b {
            display: block;
            color: #000;
            font-size: 19px;
            font-weight: 400;
            line-height: 28px;
        }
        </style>
        <slot></slot><b><slot name="value"></slot></b>`
    }
}
window.customElements.define('mem-stat', MemStat)

class TaskManager extends HTMLElement
{
    constructor()
    {
        super()
        this.attachShadow({ mode: 'open' }).innerHTML = `
        <style>
        :host {
            position: absolute;
            right: 10px;
            top: 91px;
            width: 664px;
            background: #fff;
            box-shadow: 0 0 0 1px #444, 0 2px 14px rgba(0,0,0,.5);
            z-index: 2;
        }
        button {
            border: 0;
            padding: 0;
            background: none;
            font: inherit;
            color: inherit;
        }
        header {
            display: flex;
            align-items: center;
            gap: 5px;
            padding-left: 8px;
        }
        header span { flex: 1; }
        .menu {
            display: flex;
            gap: 12px;
            height: 19px;
            padding-left: 7px;
            border-bottom: 2px solid #f0f0f0;
        }
        .menu button { height: 20px; }
        .tabs {
            display: grid;
            grid-template-columns: 67fr 132fr 128fr 84fr 90fr 87fr 56fr;
            align-items: end;
            height: 23px;
            padding: 0 18px 0 2px;
            border-bottom: 1px solid #d9d9d9;
        }
        .tabs button {
            height: 20px;
            border: 1px solid #d9d9d9;
            border-width: 1px 1px 0 0;
            background: #f0f0f0;
            white-space: nowrap;
        }
        .tabs button.on {
            height: 23px;
            padding-bottom: 2px;
            margin-bottom: -1px;
            background: #fff;
        }
        .body {
            display: flex;
            min-height: 451px;
            padding: 12px 24px 5px 4px;
        }
        .list { width: 204px; }
        .list i { font-style: normal; color: #707070; }
        .main {
            flex: 1;
            min-width: 0;
            margin: 10px 0 0 3px;
            padding-left: 26px;
            border-left: 1px solid #d9d9d9;
            color: #707070;
        }
        .top, .cap {
            display: flex;
            justify-content: space-between;
            align-items: baseline;
        }
        .top {
            height: 34px;
            color: #000;
            font-size: 15px;
            line-height: 28px;
        }
        h1 {
            margin: 0;
            font-size: 26px;
            font-weight: 400;
        }
        .cap { height: 18px; line-height: 18px; }
        svg ~ .cap { height: 19px; }
        .main svg {
            display: block;
            width: 100%;
            box-sizing: border-box;
            border: 1px solid #8b12ae;
        }
        .usage { height: 114px; }
        .parts { height: 53px; margin-top: 1px; }
        .stats {
            display: grid;
            grid-template-columns: 252px 1fr;
            padding-top: 23px;
        }
        .pair { display: flex; gap: 16px; }
        .side { line-height: 18px; white-space: nowrap; }
        footer {
            display: flex;
            align-items: center;
            gap: 7px;
            height: 48px;
            padding-left: 7px;
        }
        footer i {
            width: 1px;
            height: 14px;
            background: #ccc;
        }
        footer button { display: flex; align-items: center; gap: 7px; }
        footer button win-icon { --w: 20px; }
        footer a {
            display: flex;
            gap: 5px;
            color: #0066cc;
            text-decoration: none;
        }
        </style>
        <header><win-icon name="tm"></win-icon><span>Диспетчер задач</span><win-controls></win-controls></header>
        <div class="menu"><button>Файл</button><button>Параметры</button><button>Вид</button></div>
        <div class="tabs">
            <button>Процессы</button><button class="on">Производительность</button><button>Журнал приложений</button><button>Автозагрузка</button><button>Пользователи</button><button>Подробности</button><button>Службы</button>
        </div>
        <div class="body">
            <div class="list">
                <perf-item color="#117dbb" line="M50 38V2q1 12 2 20 1 9 3 13l1-2 1 4 1-3v4"><span slot="name">ЦП</span>4% 2,71 ГГц</perf-item>
                <perf-item color="#8b12ae" current line="M49.500 38l1-13H58v13"><span slot="name">Память</span>1,1/3,0 ГБ (37%)</perf-item>
                <perf-item color="#4da60c" line="M53.500 38l1.500-4 1.500 4"><span slot="name">Диск 0 (C:)</span>2%</perf-item>
                <perf-item color="#a74f01"><span slot="name">Ethernet</span><i>О:</i> 0 <i>П:</i> 0 кбит/с</perf-item>
            </div>
            <div class="main">
                <div class="top"><h1>Память</h1><span>3,0 ГБ</span></div>
                <div class="cap"><span>Использование памяти</span><span>3,0 ГБ</span></div>
                <svg class="usage" viewBox="0 0 400 112" preserveAspectRatio="none" aria-hidden="true">
                    <path d="M53.500 0v112M121.500 0v112M189.500 0v112M257.500 0v112M325.500 0v112M393.500 0v112M0 11.500h400M0 22.500h400M0 33.500h400M0 45.500h400M0 56.500h400M0 67.500h400M0 79.500h400M0 90.500h400M0 101.500h400" stroke="#ecdef3"/>
                    <path d="M340 112l7-40.500h53V112z" fill="#8b6a9a" fill-opacity=".12"/><path d="M340 112l7-40.500h53" fill="none" stroke="#9a33b8"/>
                </svg>
                <div class="cap"><span>60 секунд</span><span>0</span></div>
                <div class="cap">Структура памяти</div>
                <svg class="parts" viewBox="0 0 400 51" preserveAspectRatio="none" aria-hidden="true">
                    <path d="M0 0h140v51H0z" fill="#f4f2f5"/><path d="M140 0h8v51h-8z" fill="#ece4f0"/><path d="M140.500 0v51M148.500 0v51M250.500 0v51" stroke="#c9a9d3"/>
                </svg>
                <div class="stats">
                    <div>
                        <div class="pair"><mem-stat>Используется (сжатая)<span slot="value">1,0 ГБ (0 МБ)</span></mem-stat><mem-stat>Доступно<span slot="value">1,9 ГБ</span></mem-stat></div>
                        <div class="pair"><mem-stat>Выделено<span slot="value">0,9/4,2 ГБ</span></mem-stat><mem-stat>Кэшировано<span slot="value">839 МБ</span></mem-stat></div>
                        <div class="pair"><mem-stat>Выгружаемый пул<span slot="value">78,4 МБ</span></mem-stat><mem-stat>Невыгружаемый пул<span slot="value">66,3 МБ</span></mem-stat></div>
                    </div>
                    <div class="side">Использовано гнезд:<br>Зарезервировано аппара...</div>
                </div>
            </div>
        </div>
        <footer><button><win-icon name="less"></win-icon>Меньше</button><i></i><a href="#"><win-icon name="gauge"></win-icon>Открыть монитор ресурсов</a></footer>`
    }
}
window.customElements.define('task-manager', TaskManager)

class TaskBar extends HTMLElement
{
    constructor()
    {
        super()
        this.attachShadow({ mode: 'open' }).innerHTML = `
        <style>
        :host {
            display: flex;
            height: 40px;
            background: rgba(0,0,0,.85);
            color: #fff;
        }
        button {
            display: grid;
            place-items: center;
            width: 48px;
            padding: 0;
            border: 0;
            background: none;
            font: inherit;
            color: inherit;
            box-sizing: border-box;
        }
        .start { display: flex; }
        .start .files {
            --w: 24px;
            width: 40px;
            margin: 0 5px 0 7px;
            box-shadow: inset 0 -2px #76b9ed;
        }
        .start .active {
            --w: 24px;
            background: #34373b;
            box-shadow: inset 0 -2px #76b9ed;
        }
        .tray {
            flex: 1;
            display: flex;
            align-items: center;
            justify-content: flex-end;
        }
        .tray button { width: 24px; height: 40px; }
        .tray button:first-child { width: 48px; }
        .tray .lang { width: 36px; }
        .tray .clock {
            width: 72px;
            text-align: center;
            line-height: 19px;
            display: block;
        }
        .tray .note {
            width: 44px;
            padding-right: 12px;
            position: relative;
        }
        .note span {
            position: absolute;
            left: 16px;
            top: 18px;
            width: 15px;
            height: 15px;
            border: 1px solid #888;
            border-radius: 50%;
            background: #333;
            line-height: 15px;
        }
        .edge {
            width: 5px;
            height: 40px;
            border-left: 1px solid #55585c;
        }
        </style>
        <div class="start">
            <button aria-label="Пуск"><win-icon name="start"></win-icon></button>
            <button aria-label="Поиск"><win-icon name="search"></win-icon></button>
            <button aria-label="Представление задач"><win-icon name="view"></win-icon></button>
            <button class="files" aria-label="Проводник"><win-icon name="files"></win-icon></button>
            <button class="active" aria-label="Диспетчер задач"><win-icon name="taskmgr"></win-icon></button>
        </div>
        <div class="tray">
            <button aria-label="Люди"><win-icon name="people"></win-icon></button>
            <button aria-label="Скрытые значки"><win-icon name="tray"></win-icon></button>
            <button aria-label="Экран"><win-icon name="dots"></win-icon></button>
            <button aria-label="Батарея"><win-icon name="battery"></win-icon></button>
            <button aria-label="Сеть"><win-icon name="lan"></win-icon></button>
            <button aria-label="Звук"><win-icon name="sound"></win-icon></button>
            <button class="lang">ENG</button>
            <button class="clock">16:53<br>02.10.2021</button>
            <button class="note" aria-label="Уведомления"><win-icon name="note"></win-icon><span>1</span></button>
            <div class="edge"></div>
        </div>`
    }
}
window.customElements.define('task-bar', TaskBar)
</script>
</body>
</html>
